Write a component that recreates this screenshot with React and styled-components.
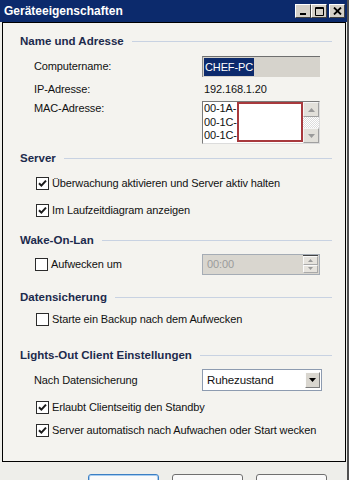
import React from 'react'
import styled, { createGlobalStyle } from 'styled-components'

const Global = createGlobalStyle`
	html, body {
		margin: 0;
		padding: 0;
		background: #eeeeea;
		overflow: hidden;
	}
	body {
		font-family: "Liberation Sans", Arial, sans-serif;
		font-size: 11px;
		letter-spacing: -0.12px;
		color: #111;
	}
`

function Check({ checked }) {
	return (
		<Box>
			{checked && (
				<svg width="9" height="9" viewBox="0 0 9 9">
					<path d="M1 4.2 L3.4 6.6 L8 1.6" fill="none" stroke="#1a1a1a" strokeWidth="2" />
				</svg>
			)}
		</Box>
	)
}

function CheckRow({ checked, label, mt }) {
	return (
		<CheckLine $mt={mt}>
			<Check checked={checked} />
			<span>{label}</span>
		</CheckLine>
	)
}

function Arrow({ dir }) {
	return (
		<svg width="7" height="4" viewBox="0 0 7 4">
			{dir === 'up'
				? <path d="M0 4 L3.5 0 L7 4 Z" fill="#9a9a9a" />
				: <path d="M0 0 L3.5 4 L7 0 Z" fill="#9a9a9a" />}
		</svg>
	)
}

function App() {
	return (
		<>
			<Global />
			<Window>
				<TitleBar>
					<Title>Geräteeigenschaften</Title>
					<Controls>
						<CtrlBtn>
							<svg width="8" height="8" viewBox="0 0 8 8"><rect x="1" y="6" width="6" height="2" fill="#000" /></svg>
						</CtrlBtn>
						<CtrlBtn>
							<svg width="9" height="9" viewBox="0 0 9 9"><path d="M0.5 0.5 H8.5 V8.5 H0.5 Z M0.5 1.5 H8.5" fill="none" stroke="#000" strokeWidth="1" /></svg>
						</CtrlBtn>
						<CtrlBtn $gap>
							<svg width="9" height="8" viewBox="0 0 9 8"><path d="M1 0.5 L8 7.5 M8 0.5 L1 7.5" stroke="#000" strokeWidth="1.8" /></svg>
						</CtrlBtn>
					</Controls>
				</TitleBar>

				<Panel>
					<Header $mt={10}>Name und Adresse</Header>
					<FieldRow $mt={6}>
						<Label>Computername:</Label>
						<ReadOnlyInput><Selected>CHEF-PC</Selected></ReadOnlyInput>
					</FieldRow>
					<FieldRow $mt={4} $h={16}>
						<Label>IP-Adresse:</Label>
						<Value>192.168.1.20</Value>
					</FieldRow>
					<FieldRow $mt={4} $h={43} $top>
						<Label>MAC-Adresse:</Label>
						<ListBox>
							<ListItems>
								<div>00-1A-</div>
								<div>00-1C-</div>
								<div>00-1C-</div>
							</ListItems>
							<Redact />
							<ScrollBar>
								<ScrollBtn><Arrow dir="up" /></ScrollBtn>
								<Track />
								<ScrollBtn><Arrow dir="down" /></ScrollBtn>
							</ScrollBar>
						</ListBox>
					</FieldRow>

					<Header $mt={6}>Server</Header>
					<CheckRow checked mt={9} label="Überwachung aktivieren und Server aktiv halten" />
					<CheckRow checked mt={11} label="Im Laufzeitdiagram anzeigen" />

					<Header $mt={14}>Wake-On-Lan</Header>
					<FieldRow $mt={5}>
						<CheckLine $inline>
							<Check />
							<span>Aufwecken um</span>
						</CheckLine>
						<TimeInput>
							<span>00:00</span>
							<Spinner>
								<SpinBtn><Arrow dir="up" /></SpinBtn>
								<SpinBtn><Arrow dir="down" /></SpinBtn>
							</Spinner>
						</TimeInput>
					</FieldRow>

					<Header $mt={14}>Datensicherung</Header>
					<CheckRow mt={6} label="Starte ein Backup nach dem Aufwecken" />

					<Header $mt={20}>Lights-Out Client Einstellungen</Header>
					<FieldRow $mt={6}>
						<Label>Nach Datensicherung</Label>
						<Select>
							<span>Ruhezustand</span>
							<DropBtn>
								<svg width="7" height="4" viewBox="0 0 7 4"><path d="M0 0 L3.5 4 L7 0 Z" fill="#000" /></svg>
							</DropBtn>
						</Select>
					</FieldRow>
					<CheckRow checked mt={8} label="Erlaubt Clientseitig den Standby" />
					<CheckRow checked mt={7} label="Server automatisch nach Aufwachen oder Start wecken" />
				</Panel>

				<Footer>
					<Button $default>OK</Button>
					<Button>Abbrechen</Button>
					<Button>Hilfe</Button>
				</Footer>
			</Window>
		</>
	)
}

const Window = styled.div`
	width: 349px;
	height: 480px;
	box-sizing: border-box;
	border-right: 2px solid #505050;
	display: flex;
	flex-direction: column;
	background: #eeeeea;
	overflow: hidden;
`
const TitleBar = styled.div`
	height: 22px;
	flex: none;
	background: #0c2a6c;
	display: flex;
	align-items: center;
	justify-content: space-between;
	padding: 0 2px 0 4px;
`
const Title = styled.div`
	color: #fff;
	font-weight: bold;
	font-size: 12px;
	letter-spacing: 0;
`
const Controls = styled.div`
	display: flex;
	align-items: center;
`
const CtrlBtn = styled.div`
	width: 16px;
	height: 14px;
	box-sizing: border-box;
	margin-left: ${p => (p.$gap ? '2px' : '0')};
	background: #d4d0c8;
	border: 1px solid;
	border-color: #fff #404040 #404040 #fff;
	display: flex;
	align-items: center;
	justify-content: center;
`
const Panel = styled.div`
	height: 440px;
	flex: none;
	box-sizing: border-box;
	margin: 0 1px 0 2px;
	border: 1px solid #000;
	background: #f4f3ef;
	padding: 0 13px 0 17px;
	display: flex;
	flex-direction: column;
`
const Header = styled.div`
	margin-top: ${p => p.$mt}px;
	height: 16px;
	display: flex;
	align-items: center;
	font-weight: bold;
	font-size: 11.5px;
	letter-spacing: 0;
	color: #1c2a4c;
	&::after {
		content: "";
		flex: 1;
		height: 1px;
		margin-left: 8px;
		background: #c8d2e2;
	}
`
const FieldRow = styled.div`
	margin-top: ${p => p.$mt}px;
	height: ${p => p.$h || 22}px;
	padding-left: 14px;
	display: grid;
	grid-template-columns: 168px auto;
	align-items: ${p => (p.$top ? 'start' : 'center')};
`
const Label = styled.div`
	line-height: 14px;
`
const Value = styled.div`
	padding-left: 2px;
`
const ReadOnlyInput = styled.div`
	width: 118px;
	height: 21px;
	box-sizing: border-box;
	background: #d6d3cc;
	border-top: 1px solid #6f6f6f;
	border-left: 1px solid #8a8a8a;
	padding: 1px;
	display: flex;
	align-items: center;
`
const Selected = styled.span`
	background: #0c2a6c;
	color: #fff;
	padding: 2px 1px;
	line-height: 14px;
`
const ListBox = styled.div`
	position: relative;
	width: 118px;
	height: 43px;
	box-sizing: border-box;
	border: 1px solid #7a7a7a;
	border-right-color: #dcdcdc;
	border-bottom-color: #dcdcdc;
	background: #fff;
	display: flex;
`
const ListItems = styled.div`
	flex: 1;
	padding-left: 1px;
	line-height: 13.6px;
`
const Redact = styled.div`
	position: absolute;
	left: 34px;
	top: 0;
	width: 66px;
	height: 40px;
	box-sizing: border-box;
	border: 2px solid #a8393d;
	background: #fff;
`
const ScrollBar = styled.div`
	width: 16px;
	display: flex;
	flex-direction: column;
	background-image: repeating-conic-gradient(#ffffff 0 25%, #dcdcdc 0 50%);
	background-size: 2px 2px;
`
const ScrollBtn = styled.div`
	height: 15px;
	background: #e2e0da;
	border: 1px solid;
	border-color: #f4f4f4 #a0a0a0 #a0a0a0 #f4f4f4;
	box-sizing: border-box;
	display: flex;
	align-items: center;
	justify-content: center;
`
const Track = styled.div`
	flex: 1;
`
const CheckLine = styled.div`
	margin-top: ${p => (p.$inline ? 0 : p.$mt)}px;
	height: 16px;
	padding-left: ${p => (p.$inline ? 0 : 15)}px;
	display: flex;
	align-items: center;
	gap: 3px;
	flex: none;
`
const Box = styled.span`
	width: 13px;
	height: 13px;
	box-sizing: border-box;
	border: 1px solid #2b2b2b;
	background: #fff;
	display: inline-flex;
	align-items: center;
	justify-content: center;
	margin-left: 1px;
`
const TimeInput = styled.div`
	width: 118px;
	height: 21px;
	box-sizing: border-box;
	border: 1px solid #a5acb5;
	background: #d9d6cf;
	color: #9b9b9b;
	padding-left: 4px;
	display: flex;
	align-items: center;
	justify-content: space-between;
`
const Spinner = styled.div`
	width: 15px;
	height: 17px;
	margin-right: 1px;
	display: flex;
	flex-direction: column;
	border-top: 1px solid #444;
`
const SpinBtn = styled.div`
	flex: 1;
	background: #e6e3dd;
	border: 1px solid;
	border-color: #fafafa #a9a9a9 #a9a9a9 #fafafa;
	display: flex;
	align-items: center;
	justify-content: center;
	svg { width: 5px; height: 3px; }
`
const Select = styled.div`
	width: 120px;
	height: 22px;
	box-sizing: border-box;
	border: 1px solid #8d9bb0;
	background: #fff;
	padding: 0 1px 0 4px;
	display: flex;
	align-items: center;
	justify-content: space-between;
	font-size: 11.5px;
`
const DropBtn = styled.div`
	width: 15px;
	height: 16px;
	box-sizing: border-box;
	background: #d9d6cf;
	border: 1px solid;
	border-color: #fdfdfd #7c7c7c #7c7c7c #fdfdfd;
	display: flex;
	align-items: center;
	justify-content: center;
`
const Footer = styled.div`
	flex: 1;
	display: flex;
	padding: 12px 0 0 88px;
	gap: 13px;
`
const Button = styled.div`
	width: 71px;
	height: 23px;
	box-sizing: border-box;
	border: 1px solid ${p => (p.$default ? '#3b7fc4' : '#6f6f6f')};
	box-shadow: ${p => (p.$default ? 'inset 0 0 0 1px #a9cdf0' : 'none')};
	border-radius: 3px;
	background: #fafafa;
	display: flex;
	align-items: center;
	justify-content: center;
	padding-top: 10px;
`

export default App
